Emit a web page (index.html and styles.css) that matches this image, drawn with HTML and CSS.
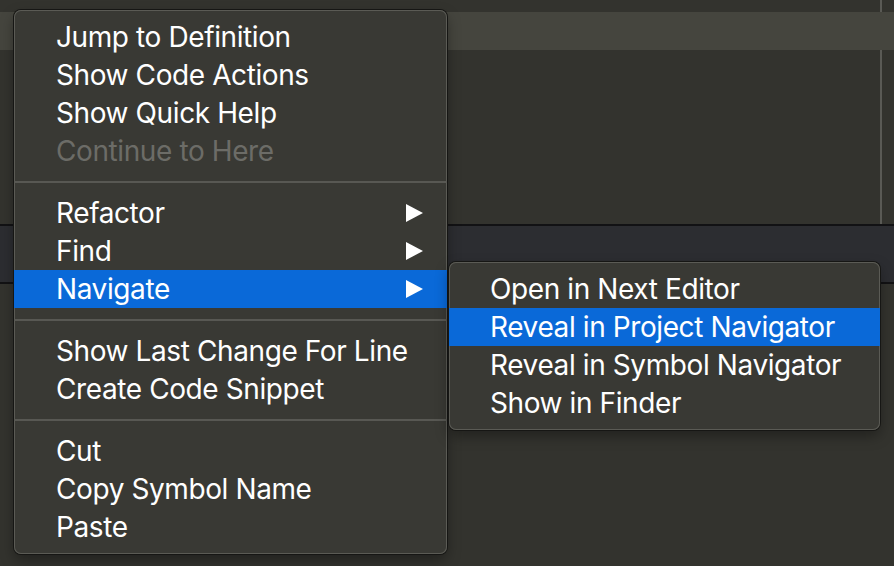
FILE: index.html
```html
<!DOCTYPE html>
<html>
<head>
<meta charset="utf-8">
<link rel="stylesheet" href="styles.css">
</head>
<body>
<div class="editor">
  <div class="strip strip-top"><div class="pane"></div><div class="divider"></div><div class="side"></div></div>
  <div class="band"></div>
  <div class="strip strip-mid"><div class="pane"></div><div class="divider"></div><div class="side"></div></div>
  <div class="bar"></div>
  <div class="rest"></div>
</div>

<div class="menu main-menu">
  <div class="item">Jump to Definition</div>
  <div class="item">Show Code Actions</div>
  <div class="item">Show Quick Help</div>
  <div class="item disabled">Continue to Here</div>
  <div class="sep"></div>
  <div class="item has-sub">Refactor<svg class="arrow" viewBox="0 0 17 18"><polygon points="0,0 17,9 0,18"/></svg></div>
  <div class="item has-sub">Find<svg class="arrow" viewBox="0 0 17 18"><polygon points="0,0 17,9 0,18"/></svg></div>
  <div class="item has-sub selected">Navigate<svg class="arrow" viewBox="0 0 17 18"><polygon points="0,0 17,9 0,18"/></svg></div>
  <div class="sep"></div>
  <div class="item">Show Last Change For Line</div>
  <div class="item">Create Code Snippet</div>
  <div class="sep"></div>
  <div class="item">Cut</div>
  <div class="item">Copy Symbol Name</div>
  <div class="item">Paste</div>
</div>

<div class="menu sub-menu">
  <div class="item">Open in Next Editor</div>
  <div class="item selected">Reveal in Project Navigator</div>
  <div class="item">Reveal in Symbol Navigator</div>
  <div class="item">Show in Finder</div>
</div>
</body>
</html>
```
FILE: styles.css
```css
html, body {
  margin: 0;
  padding: 0;
}
body {
  width: 894px;
  height: 566px;
  overflow: hidden;
  position: relative;
  background: #33332e;
  font-family: Inter, "Noto Sans", sans-serif;
}
.editor {
  display: flex;
  flex-direction: column;
  height: 566px;
}
.strip {
  display: grid;
  grid-template-columns: 880px 2px 12px;
}
.strip-top { height: 12px; }
.strip-mid { height: 174px; }
.divider { background: #5a5a55; }
.band {
  height: 38px;
  background: #45453e;
}
.bar {
  height: 56px;
  background: #2c2d31;
  border-top: 2px solid #121214;
  border-bottom: 2px solid #121214;
}
.rest { flex: 1; }

.menu {
  position: absolute;
  box-sizing: border-box;
  background: #393934;
  border-radius: 7px;
  padding: 8px 0;
  box-shadow: inset 0 0 0 1px #5b5b55, 0 0 0 1px #161614, 0 6px 14px rgba(0,0,0,0.35);
  color: #ffffff;
  font-size: 28px;
  letter-spacing: -0.4px;
  overflow: hidden;
}
.main-menu {
  left: 14px;
  top: 10px;
  width: 433px;
}
.sub-menu {
  left: 449px;
  top: 262px;
  width: 431px;
}
.item {
  height: 38px;
  line-height: 38px;
  padding-left: 42px;
  display: flex;
  align-items: center;
  white-space: nowrap;
}
.sub-menu .item { padding-left: 41px; }
.item.disabled { color: #6c6c67; }
.item.selected { background: #0a69d8; }
.has-sub { justify-content: space-between; padding-right: 24px; }
.arrow {
  width: 17px;
  height: 18px;
  fill: #ffffff;
}
.sep {
  height: 24px;
  display: flex;
  flex-direction: column;
  justify-content: center;
}
.sep::before {
  content: "";
  height: 2px;
  background: #585853;
}
```
